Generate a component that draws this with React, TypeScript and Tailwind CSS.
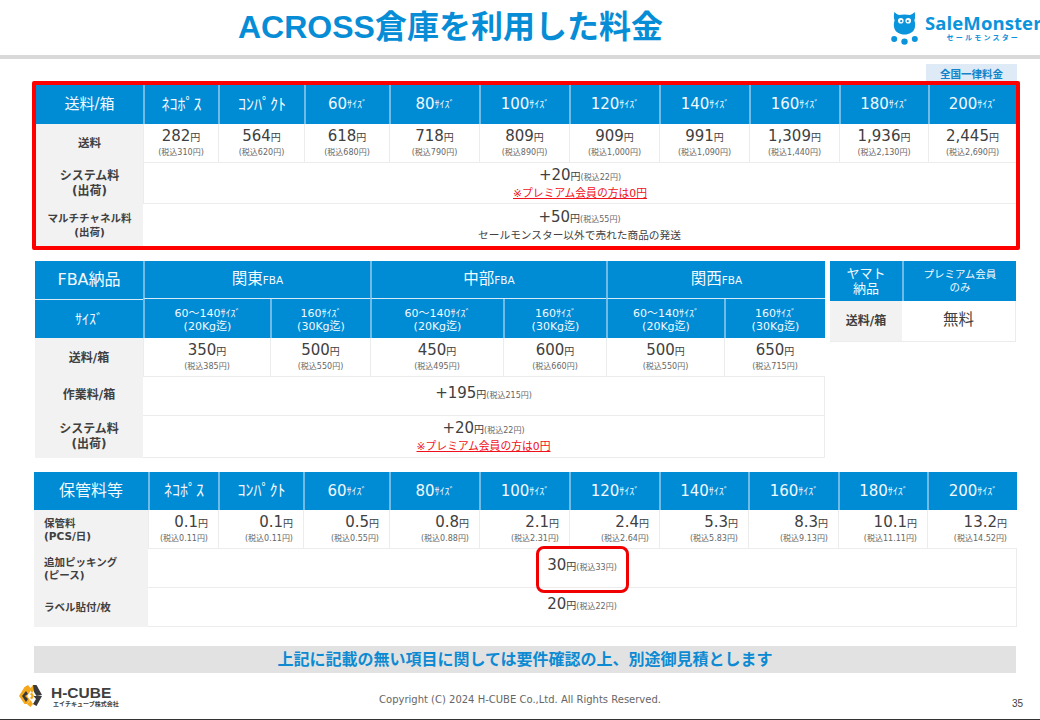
import React from "react";

const sizes = ["60", "80", "100", "120", "140", "160", "180", "200"];
const ship = [
  ["282", "310"], ["564", "620"], ["618", "680"], ["718", "790"], ["809", "890"],
  ["909", "1,000"], ["991", "1,090"], ["1,309", "1,440"], ["1,936", "2,130"], ["2,445", "2,690"],
];
const storage = [
  ["0.1", "0.11"], ["0.1", "0.11"], ["0.5", "0.55"], ["0.8", "0.88"], ["2.1", "2.31"],
  ["2.4", "2.64"], ["5.3", "5.83"], ["8.3", "9.13"], ["10.1", "11.11"], ["13.2", "14.52"],
];
const fbaHeads = [
  ["60～140", "20Kg迄"], ["160", "30Kg迄"], ["60～140", "20Kg迄"], ["160", "30Kg迄"], ["60～140", "20Kg迄"], ["160", "30Kg迄"],
];
const fbaPrices = [["350", "385"], ["500", "550"], ["450", "495"], ["600", "660"], ["500", "550"], ["650", "715"]];

function Head({ children, first = false, className = "" }: { children: React.ReactNode; first?: boolean; className?: string }) {
  return (
    <div className={`flex items-center justify-center bg-[#008bd5] text-[#f2f9fd] ${first ? "" : "border-l-2 border-[#6fbbe8]"} ${className}`}>
      {children}
    </div>
  );
}

function SizeHeads() {
  return (
    <>
      <Head><span className="text-[16px]">ﾈｺﾎﾟｽ</span></Head>
      <Head><span className="text-[16px]">ｺﾝﾊﾟｸﾄ</span></Head>
      {sizes.map((s) => (
        <Head key={s}>
          <span className="text-[15px]">{s}</span>
          <span className="text-[10px]">ｻｲｽﾞ</span>
        </Head>
      ))}
    </>
  );
}

function Label({ children, className = "" }: { children: React.ReactNode; className?: string }) {
  return (
    <div className={`flex flex-col justify-center bg-[#f2f2f2] font-bold text-[#404040] ${className}`}>{children}</div>
  );
}

function Price({ v, tax, alignRight = false }: { v: string; tax: string; alignRight?: boolean }) {
  return (
    <div className={`flex flex-col border-b border-l border-[#ececec] bg-white justify-center ${alignRight ? "items-end pr-[10px]" : "items-center"}`}>
      <div className="leading-[18px] text-[#404040]">
        <span className="text-[15px]">{v}</span>
        <span className="text-[10px]">円</span>
      </div>
      <div className="text-[8px] leading-[12px] text-[#666666]">(税込{tax}円)</div>
    </div>
  );
}

function Inline({ v, tax }: { v: string; tax: string }) {
  return (
    <div className="leading-[18px] text-[#404040]">
      <span className="text-[15px]">{v}</span>
      <span className="text-[10px]">円</span>
      <span className="text-[8px] text-[#666666]">(税込{tax}円)</span>
    </div>
  );
}

function Wide({ children, className = "" }: { children: React.ReactNode; className?: string }) {
  return (
    <div className={`flex flex-col items-center justify-center border-b border-[#ececec] bg-white ${className}`}>{children}</div>
  );
}

function Premium() {
  return <div className="text-[10.8px] leading-[14px] text-[#f01020] underline">※プレミアム会員の方は0円</div>;
}

function Monster() {
  return (
    <svg width="27" height="33" viewBox="0 0 27 33" className="shrink-0">
      <path
        d="M3.4 0 C5 1.5 6.5 2.6 8 3 C11 2.2 16 2.2 19 3 C20.5 2.6 22 1.5 23.6 0 C24.4 3 24.2 6 23.4 8.5 C24.4 11 24.4 14 23.6 16.5 C22.4 20 18.5 22.5 13.5 22.5 C8.5 22.5 4.6 20 3.4 16.5 C2.6 14 2.6 11 3.6 8.5 C2.8 6 2.6 3 3.4 0 Z"
        fill="#0a94dc"
      />
      <circle cx="9.8" cy="8.8" r="2.8" fill="#fff" />
      <circle cx="17.2" cy="8.8" r="2.8" fill="#fff" />
      <circle cx="10.2" cy="9.2" r="1.1" fill="#0a94dc" />
      <circle cx="16.8" cy="9.2" r="1.1" fill="#0a94dc" />
      <circle cx="3.2" cy="27" r="3" fill="#0a94dc" />
      <circle cx="13.5" cy="29.6" r="3.2" fill="#0a94dc" />
      <circle cx="23.8" cy="27" r="3" fill="#0a94dc" />
    </svg>
  );
}

function CubeLogo() {
  return (
    <svg width="23" height="22" viewBox="0 0 23 22" className="shrink-0">
      <polygon points="0,11 5.5,2 9,2 11.5,6 8,11 11,15 8,19 5.5,19" fill="#f5a81c" />
      <polygon points="5.5,2 9,0 11.5,3 14,0 17.5,2 13,8 11.5,6" fill="#f5a81c" />
      <polygon points="14,0 17.5,0 23,10 17.5,11 15,7" fill="#3a3a3a" />
      <polygon points="23,11 17.5,21 14,19 17,14 14.5,11 17.5,11" fill="#3a3a3a" />
      <polygon points="8,19 11.5,15 14,19 11.5,22 9,20" fill="#f5a81c" />
      <polygon points="3,11 7,6 9,9 6,11 9,14 7,17" fill="#3a3a3a" />
      <polygon points="11,9 13,7.5 15,11 13,14.5 11,13 12.5,11" fill="#f5a81c" />
    </svg>
  );
}

export default function App() {
  return (
    <div className="relative flex h-[720px] w-[1040px] flex-col overflow-hidden bg-white text-[#404040] [font-family:'DejaVu_Sans','Noto_Sans_CJK_JP',sans-serif]">
      {/* title */}
      <header className="flex h-[55px] shrink-0 items-start">
        <h1 className="mt-[8px] pl-[238px] text-[32px] leading-[38px] font-bold whitespace-nowrap text-[#078dd6] [font-family:'Liberation_Sans','Noto_Sans_CJK_JP',sans-serif]">
          ACROSS倉庫を利用した料金
        </h1>
        <div className="mt-[12px] ml-auto flex w-[149px] gap-[7px]">
          <Monster />
          <div className="flex flex-col items-center">
            <div className="text-[18.5px] leading-[22px] font-bold tracking-[0.1px] whitespace-nowrap text-[#0a94dc] [font-family:'Open_Sans',sans-serif]">SaleMonster</div>
            <div className="text-[7px] leading-[9px] font-bold tracking-[2.2px] whitespace-nowrap text-[#0a94dc]">セールモンスター</div>
          </div>
        </div>
      </header>
      <div className="h-[4px] shrink-0 bg-[#d9d9d9]" />

      {/* badge */}
      <div className="mt-[5px] ml-[926px] flex h-[17px] w-[91px] shrink-0 items-end justify-center bg-[#deeaf6] text-[10.5px] leading-[14px] font-bold text-[#1283c9]">
        全国一律料金
      </div>

      {/* table 1 */}
      <section className="relative ml-[32px] h-[169px] w-[988px] shrink-0 rounded-[2px] border-4 border-[#ff0000]">
        <div className="grid h-[161px] grid-cols-[107px_75px_86px_85px_90px_90px_90px_90px_90px_89px_88px] grid-rows-[39px_39px_41px_42px]">
          <Head first><span className="text-[15px]">送料/箱</span></Head>
          <SizeHeads />
          <Label className="items-center text-[11.5px]">送料</Label>
          {ship.map(([v, t], i) => (
            <Price key={i} v={v} tax={t} />
          ))}
          <Label className="items-center text-[12px] leading-[15px]">
            <span>システム料</span>
            <span>(出荷)</span>
          </Label>
          <Wide className="col-span-10 border-l border-l-[#ececec]">
            <Inline v="+20" tax="22" />
            <Premium />
          </Wide>
          <Label className="items-center text-[10.5px] leading-[14px]">
            <span>マルチチャネル料</span>
            <span>(出荷)</span>
          </Label>
          <Wide className="col-span-10 border-b-0">
            <Inline v="+50" tax="55" />
            <div className="text-[10.7px] leading-[14px]">セールモンスター以外で売れた商品の発送</div>
          </Wide>
        </div>
      </section>

      {/* table 2 + yamato */}
      <section className="mt-[11px] ml-[35px] flex shrink-0 items-start gap-[5px]">
        <div className="grid w-[790px] grid-cols-[108px_127px_100px_133px_103px_118px_101px] grid-rows-[38px_39px_39px_39px_42px]">
          <Head first><span className="text-[16px]">FBA納品</span></Head>
          {["関東", "中部", "関西"].map((n) => (
            <Head key={n} className="col-span-2 border-b border-b-[#d5ebf8]">
              <span className="text-[15.5px]">{n}</span>
              <span className="mt-[3px] text-[10.5px]">FBA</span>
            </Head>
          ))}
          <Head first className="border-t border-t-[#d5ebf8]"><span className="text-[14px]">ｻｲｽﾞ</span></Head>
          {fbaHeads.map(([a, b], i) => (
            <Head key={i} className="flex-col">
              <div className="leading-[13px]">
                <span className="text-[11px]">{a}</span>
                <span className="text-[10px]">ｻｲｽﾞ</span>
              </div>
              <div className="text-[11px] leading-[13px]">({b})</div>
            </Head>
          ))}
          <Label className="items-center text-[12px]">送料/箱</Label>
          {fbaPrices.map(([v, t], i) => (
            <Price key={i} v={v} tax={t} />
          ))}
          <Label className="items-center pb-[3px] text-[12px]">作業料/箱</Label>
          <Wide className="col-span-6 border-r pb-[3px]">
            <Inline v="+195" tax="215" />
          </Wide>
          <Label className="items-center text-[12px] leading-[15px]">
            <span>システム料</span>
            <span>(出荷)</span>
          </Label>
          <Wide className="col-span-6 border-r">
            <Inline v="+20" tax="22" />
            <Premium />
          </Wide>
        </div>

        <div className="grid w-[186px] grid-cols-[72px_114px] grid-rows-[40px_40px] border-b border-[#ececec]">
          <Head first className="flex-col text-[13px] leading-[15px]">
            <span>ヤマト</span>
            <span>納品</span>
          </Head>
          <Head className="flex-col text-[10.5px] leading-[13px]">
            <span>プレミアム会員</span>
            <span>のみ</span>
          </Head>
          <Label className="items-center text-[12px]">送料/箱</Label>
          <div className="flex items-center justify-center border-r border-[#ececec] bg-white text-[15.5px] text-[#404040]">無料</div>
        </div>
      </section>

      {/* table 3 */}
      <section className="mt-[14px] ml-[34px] w-[983px] shrink-0">
        <div className="grid h-[155px] grid-cols-[114px_70px_85px_86px_90px_90px_90px_89px_90px_89px_90px] grid-rows-[38px_39px_39px_39px]">
          <Head first><span className="text-[16px]">保管料等</span></Head>
          <SizeHeads />
          <Label className="pl-[10px] text-[10.5px] leading-[13px]">
            <span>保管料</span>
            <span>(PCS/日)</span>
          </Label>
          {storage.map(([v, t], i) => (
            <Price key={i} v={v} tax={t} alignRight />
          ))}
          <Label className="pl-[10px] text-[10.5px] leading-[13px]">
            <span>追加ピッキング</span>
            <span>(ピース)</span>
          </Label>
          <Wide className="col-span-10 border-r pb-[4px]">
            <Inline v="30" tax="33" />
          </Wide>
          <Label className="pl-[10px] text-[10.5px]">ラベル貼付/枚</Label>
          <Wide className="col-span-10 border-r pb-[4px]">
            <Inline v="20" tax="22" />
          </Wide>
        </div>
      </section>

      {/* banner */}
      <div className="mt-[19px] ml-[34px] flex h-[27px] w-[982px] shrink-0 items-center justify-center bg-[#e2e2e2] text-[16px] font-bold text-[#0d8ad2]">
        上記に記載の無い項目に関しては要件確認の上、別途御見積とします
      </div>

      {/* footer */}
      <footer className="grid h-[46px] shrink-0 grid-cols-[1fr_auto_1fr]">
        <div className="flex items-start gap-[9px] pt-[12px] pl-[19px]">
          <CubeLogo />
          <div className="flex flex-col items-start">
            <div className="text-[15.5px] leading-[15px] font-bold text-[#404040] [font-family:'Liberation_Sans',sans-serif]">H-CUBE</div>
            <div className="ml-[2px] text-[6px] leading-[7px] font-bold whitespace-nowrap text-[#404040]">エイチキューブ株式会社</div>
          </div>
        </div>
        <div className="pt-[20px] text-[10px] leading-[14px] text-[#666666]">Copyright (C) 2024 H-CUBE Co.,Ltd. All Rights Reserved.</div>
        <div className="pt-[24px] pr-[17px] text-right text-[10px] leading-[14px] text-[#404040] [font-family:'Liberation_Sans',sans-serif]">35</div>
      </footer>
      <div className="h-[1px] shrink-0 bg-[#333333]" />

      {/* red highlight over the 30円 row */}
      <div className="pointer-events-none absolute top-[546px] left-[536px] h-[47px] w-[93px] rounded-[8px] border-[3px] border-[#f00000]" />
    </div>
  );
}
